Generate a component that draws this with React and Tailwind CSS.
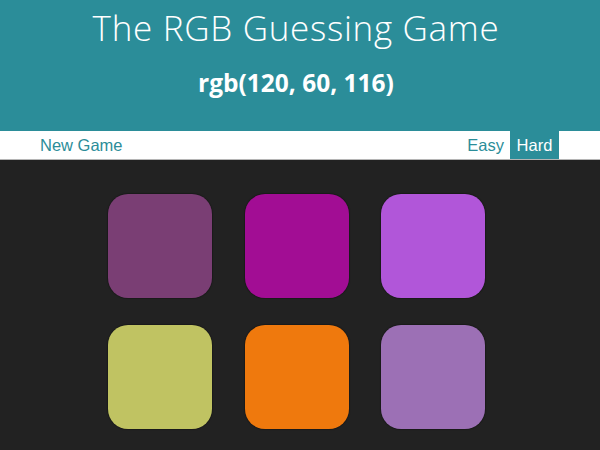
const squares = ["#7a3e74", "#a20d94", "#b156d9", "#c0c362", "#ef790d", "#9c70b5"]

export default function App() {
  return (
    <div className="w-[600px] h-[450px] bg-[#222222] overflow-hidden font-['Liberation_Sans',Arial,sans-serif]">
      <header className="h-[131px] pr-[8px] bg-[#2b8d99] text-white text-center font-['Open_Sans',sans-serif]">
        <h1 className="pt-[6px] text-[35px] leading-[44px] font-light tracking-[0.7px]">The RGB Guessing Game</h1>
        <div className="mt-[16px] text-[24.5px] leading-[34px] font-bold">rgb(120, 60, 116)</div>
      </header>
      <nav className="h-[29px] bg-white border-b border-[#b5b5b5] flex items-stretch text-[16.5px] text-[#2b8d99]">
        <button className="ml-[40px] leading-[28px]">New Game</button>
        <div className="ml-auto mr-[41px] flex">
          <button className="px-[6px] leading-[28px]">Easy</button>
          <button className="leading-[28px] w-[49px] bg-[#2b8d99] text-white">Hard</button>
        </div>
      </nav>
      <main className="pt-[34px] pl-[108px] grid grid-cols-[repeat(3,104px)] gap-x-[32.5px] gap-y-[27px]">
        {squares.map((c) => (
          <div key={c} className="w-[104px] h-[104px] rounded-[20px] shadow-[0_0_1px_1px_rgba(0,0,0,0.25)]" style={{ backgroundColor: c }} />
        ))}
      </main>
    </div>
  )
}
